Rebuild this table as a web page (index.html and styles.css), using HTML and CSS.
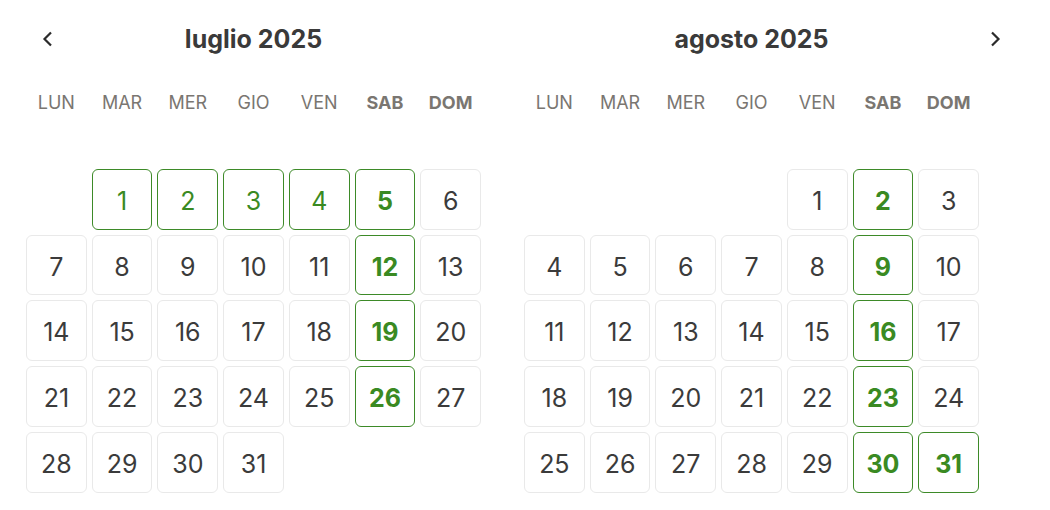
FILE: index.html
```html
<!DOCTYPE html>
<html>
  <head>
    <title>Calendario</title>
    <link rel="stylesheet" href="styles.css">
  </head>
  <body>
    <div class="picker">
      <button class="nav prev" aria-label="Mese precedente">
        <svg width="12" height="16" viewBox="0 0 12 16"><path d="M9 1.5 L2.5 8 L9 14.5" fill="none" stroke="#2b2b2b" stroke-width="2.2"/></svg>
      </button>
      <button class="nav next" aria-label="Mese successivo">
        <svg width="12" height="16" viewBox="0 0 12 16"><path d="M3 1.5 L9.5 8 L3 14.5" fill="none" stroke="#2b2b2b" stroke-width="2.2"/></svg>
      </button>

      <div class="month">
        <h2>luglio 2025</h2>
        <div class="weekdays">
          <span>LUN</span><span>MAR</span><span>MER</span><span>GIO</span><span>VEN</span><span class="we">SAB</span><span class="we">DOM</span>
        </div>
        <div class="days">
          <span class="empty"></span>
          <span class="day on">1</span>
          <span class="day on">2</span>
          <span class="day on">3</span>
          <span class="day on">4</span>
          <span class="day on we">5</span>
          <span class="day">6</span>
          <span class="day">7</span>
          <span class="day">8</span>
          <span class="day">9</span>
          <span class="day">10</span>
          <span class="day">11</span>
          <span class="day on we">12</span>
          <span class="day">13</span>
          <span class="day">14</span>
          <span class="day">15</span>
          <span class="day">16</span>
          <span class="day">17</span>
          <span class="day">18</span>
          <span class="day on we">19</span>
          <span class="day">20</span>
          <span class="day">21</span>
          <span class="day">22</span>
          <span class="day">23</span>
          <span class="day">24</span>
          <span class="day">25</span>
          <span class="day on we">26</span>
          <span class="day">27</span>
          <span class="day">28</span>
          <span class="day">29</span>
          <span class="day">30</span>
          <span class="day">31</span>
        </div>
      </div>

      <div class="month">
        <h2>agosto 2025</h2>
        <div class="weekdays">
          <span>LUN</span><span>MAR</span><span>MER</span><span>GIO</span><span>VEN</span><span class="we">SAB</span><span class="we">DOM</span>
        </div>
        <div class="days">
          <span class="empty"></span>
          <span class="empty"></span>
          <span class="empty"></span>
          <span class="empty"></span>
          <span class="day">1</span>
          <span class="day on we">2</span>
          <span class="day">3</span>
          <span class="day">4</span>
          <span class="day">5</span>
          <span class="day">6</span>
          <span class="day">7</span>
          <span class="day">8</span>
          <span class="day on we">9</span>
          <span class="day">10</span>
          <span class="day">11</span>
          <span class="day">12</span>
          <span class="day">13</span>
          <span class="day">14</span>
          <span class="day">15</span>
          <span class="day on we">16</span>
          <span class="day">17</span>
          <span class="day">18</span>
          <span class="day">19</span>
          <span class="day">20</span>
          <span class="day">21</span>
          <span class="day">22</span>
          <span class="day on we">23</span>
          <span class="day">24</span>
          <span class="day">25</span>
          <span class="day">26</span>
          <span class="day">27</span>
          <span class="day">28</span>
          <span class="day">29</span>
          <span class="day on we">30</span>
          <span class="day on we">31</span>
        </div>
      </div>
    </div>
  </body>
</html>
```

FILE: styles.css
```css
body {
  margin: 0;
  font-family: Inter, "Noto Sans", sans-serif;
  background: #fff;
  color: #3b3b3b;
}
.picker {
  position: relative;
  display: flex;
  gap: 43px;
  padding-left: 26px;
}
.nav {
  position: absolute;
  top: 31px;
  width: 12px;
  height: 16px;
  padding: 0;
  border: none;
  background: none;
  cursor: pointer;
}
.nav svg {
  display: block;
}
.prev {
  left: 42px;
}
.next {
  left: 989px;
}
.month {
  width: 455px;
}
.month h2 {
  margin: 0;
  height: 78px;
  line-height: 78px;
  text-align: center;
  font-size: 25px;
  font-weight: 700;
  color: #3a3a3a;
}
.weekdays {
  display: grid;
  grid-template-columns: repeat(7, 1fr);
  gap: 5px;
  margin-top: 13px;
  height: 24px;
  line-height: 24px;
  font-size: 18px;
  color: #7a7671;
  text-align: center;
}
.weekdays .we {
  font-weight: 700;
}
.days {
  display: grid;
  grid-template-columns: repeat(7, 1fr);
  gap: 5px;
  margin-top: 54px;
}
.day {
  display: flex;
  align-items: center;
  justify-content: center;
  aspect-ratio: 1;
  box-sizing: border-box;
  padding-top: 3px;
  border: 1px solid #e9e9e9;
  border-radius: 6px;
  font-size: 25px;
  color: #3b3b3b;
}
.day.on {
  border-color: #3d8a28;
  color: #3a8a22;
}
.day.we {
  font-weight: 700;
}
```
